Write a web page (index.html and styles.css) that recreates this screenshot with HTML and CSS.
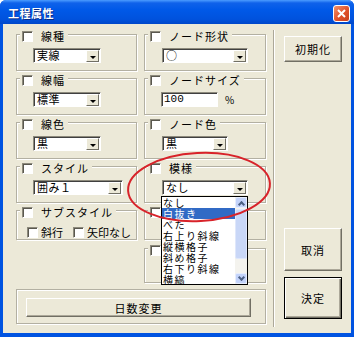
FILE: index.html
```html
<!DOCTYPE html>
<html lang="ja">
<head>
  <meta charset="UTF-8" />
  <title>工程属性</title>
  <link rel="stylesheet" href="styles.css">
</head>
<body>
  <div class="window">
    <div class="titlebar">
      <span class="title">工程属性</span>
      <span class="close-btn">
        <svg width="9" height="9" viewBox="0 0 9 9"><path d="M1 1 L8 8 M8 1 L1 8" stroke="#fff" stroke-width="2"/></svg>
      </span>
    </div>

    <div class="client">
      <div class="panels">
        <div class="cols">
          <div class="col">
            <div class="group">
              <div class="legend"><span class="check"></span><span class="cap">線種</span></div>
              <div class="combo w68"><span class="value">実線</span><span class="drop"></span></div>
            </div>
            <div class="group">
              <div class="legend"><span class="check"></span><span class="cap">線幅</span></div>
              <div class="combo w68"><span class="value">標準</span><span class="drop"></span></div>
            </div>
            <div class="group">
              <div class="legend"><span class="check"></span><span class="cap">線色</span></div>
              <div class="combo w68"><span class="value">黒</span><span class="drop"></span></div>
            </div>
            <div class="group">
              <div class="legend"><span class="check"></span><span class="cap">スタイル</span></div>
              <div class="combo w90"><span class="value">囲み１</span><span class="drop"></span></div>
            </div>
            <div class="group short">
              <div class="legend"><span class="check"></span><span class="cap">サブスタイル</span></div>
              <div class="subrow">
                <span class="check"></span><span class="sub-cap">斜行</span>
                <span class="check"></span><span class="sub-cap">矢印なし</span>
              </div>
            </div>
          </div>

          <div class="col mid">
            <div class="group">
              <div class="legend"><span class="check"></span><span class="cap">ノード形状</span></div>
              <div class="combo w86"><span class="value">○</span><span class="drop"></span></div>
            </div>
            <div class="group">
              <div class="legend"><span class="check"></span><span class="cap">ノードサイズ</span></div>
              <div class="size-row">
                <div class="edit">100</div><span class="unit">%</span>
              </div>
            </div>
            <div class="group">
              <div class="legend"><span class="check"></span><span class="cap">ノード色</span></div>
              <div class="combo w66"><span class="value">黒</span><span class="drop"></span></div>
            </div>
            <div class="group">
              <div class="legend"><span class="check"></span><span class="cap">模様</span></div>
              <div class="combo w86 open">
                <span class="value">なし</span><span class="drop"></span>
                <div class="listbox">
                  <div class="options">
                    <div class="opt">なし</div>
                    <div class="opt selected">白抜き</div>
                    <div class="opt">べた</div>
                    <div class="opt">右上り斜線</div>
                    <div class="opt">縦横格子</div>
                    <div class="opt">斜め格子</div>
                    <div class="opt">右下り斜線</div>
                    <div class="opt">横縞</div>
                  </div>
                  <div class="scroll">
                    <span class="sbtn up"></span>
                    <span class="thumb"></span>
                    <span class="sbtn down"></span>
                  </div>
                </div>
              </div>
            </div>
            <div class="group short">
              <div class="legend"><span class="check"></span></div>
            </div>
            <div class="group last">
              <div class="legend"><span class="check"></span></div>
            </div>
          </div>
        </div>

        <div class="group wide">
          <button class="btn days">日数変更</button>
        </div>
      </div>

      <div class="sep"></div>

      <div class="side">
        <button class="btn init">初期化</button>
        <button class="btn cancel">取消</button>
        <button class="btn ok">決定</button>
      </div>
    </div>

    <svg class="mark" width="160" height="84" viewBox="0 0 160 84">
      <ellipse cx="76" cy="40" rx="71" ry="34" transform="rotate(-3 76 40)" fill="none" stroke="#d8232a" stroke-width="2"/>
    </svg>
  </div>
</body>
</html>
```

FILE: styles.css
```css
* {
  box-sizing: border-box;
}
body {
  margin: 0;
  background: #fff;
  font-family: "Noto Sans CJK JP", sans-serif;
  font-size: 11px;
  color: #000;
}
.window {
  position: relative;
  width: 354px;
  height: 337px;
  background: #0053e1;
  border-radius: 6px 6px 0 0;
  padding: 0 3px 4px;
  display: flex;
  flex-direction: column;
}
.titlebar {
  height: 24px;
  margin: 0 -3px;
  padding: 2px 4px 0 8px;
  display: flex;
  align-items: center;
  justify-content: space-between;
  border-radius: 6px 6px 0 0;
  background: linear-gradient(#4b9cff 0, #0f62ea 3px, #0059e8 40%, #0052dd 80%, #0047c9 100%);
}
.title {
  color: #fff;
  font-weight: bold;
  font-size: 11px;
  letter-spacing: 0.5px;
  text-shadow: 1px 1px #0b2a84;
}
.close-btn {
  width: 17px;
  height: 17px;
  border: 1px solid #fff;
  border-radius: 3px;
  background: linear-gradient(135deg, #f0926c, #e0522b 55%, #c8401c);
  display: flex;
  align-items: center;
  justify-content: center;
}
.client {
  flex: 1;
  background: #ece9d8;
  display: flex;
  padding-left: 13px;
}
.panels {
  width: 250px;
  padding-top: 10px;
}
.cols {
  display: grid;
  grid-template-columns: 121px 122px;
  column-gap: 7px;
  align-items: start;
}
.col {
  display: flex;
  flex-direction: column;
  gap: 7px;
}
.group {
  height: 37px;
  border: 1px solid #b3b0a2;
  box-shadow: inset 1px 1px #fff, 1px 1px #fff;
}
.group.short {
  height: 30px;
}
.group.last {
  height: 35px;
  margin-top: 1px;
}
.legend {
  display: flex;
  align-items: center;
  width: fit-content;
  height: 12px;
  margin: -5px 0 0 3px;
  padding: 0 3px 0 2px;
  background: #ece9d8;
}
.check {
  width: 11px;
  height: 11px;
  flex: none;
  background: #fff;
  border: 1px solid;
  border-color: #8d8a7c #fff #fff #8d8a7c;
  box-shadow: inset 1px 1px #5a584f;
}
.cap {
  margin-left: 8px;
  letter-spacing: 1px;
  white-space: nowrap;
}
.combo {
  position: relative;
  display: flex;
  height: 15px;
  margin: 6px 0 0 16px;
  background: #fff;
  border: 1px solid;
  border-color: #8d8a7c #fff #fff #8d8a7c;
  box-shadow: inset 1px 1px #404040;
}
.mid .combo {
  margin-left: 17px;
}
.w68 { width: 68px; }
.w90 { width: 90px; }
.w86 { width: 86px; }
.w66 { width: 66px; }
.value {
  padding: 0 0 0 3px;
  line-height: 13px;
  letter-spacing: 0.5px;
}
.drop {
  position: relative;
  width: 13px;
  margin: 1px 1px 0 auto;
  background: #ece9d8;
  border: 1px solid;
  border-color: #fff #716f64 #716f64 #fff;
}
.drop::after {
  content: "";
  position: absolute;
  left: 3px;
  top: 5px;
  border-left: 3px solid transparent;
  border-right: 3px solid transparent;
  border-top: 3px solid #000;
}
.size-row {
  display: flex;
  align-items: center;
  margin: 6px 0 0 16px;
}
.edit {
  width: 57px;
  height: 15px;
  padding-left: 2px;
  background: #fff;
  border: 1px solid;
  border-color: #8d8a7c #fff #fff #8d8a7c;
  box-shadow: inset 1px 1px #404040;
  font-family: "Liberation Mono", monospace;
  font-size: 11px;
  line-height: 13px;
}
.unit {
  margin-left: 7px;
  font-size: 10px;
}
.subrow {
  display: flex;
  align-items: center;
  margin: 6px 0 0 10px;
  white-space: nowrap;
}
.sub-cap {
  flex: none;
  margin: 0 10px 0 3px;
}
.listbox {
  position: absolute;
  left: -2px;
  top: 15px;
  width: 87px;
  height: 89px;
  display: flex;
  background: #fff;
  border: 1px solid #000;
  z-index: 2;
}
.options {
  flex: 1;
  min-width: 0;
}
.opt {
  height: 11px;
  line-height: 11px;
  font-size: 10px;
  padding-left: 1px;
  letter-spacing: 1.5px;
  white-space: nowrap;
}
.opt.selected {
  background: #316ac5;
  color: #fff;
}
.scroll {
  width: 12px;
  display: flex;
  flex-direction: column;
  background: #f4f3ee;
}
.sbtn {
  position: relative;
  height: 11px;
  border-radius: 2px;
  background: #c3d3fa;
  border: 1px solid #e6edfd;
}
.sbtn::after {
  content: "";
  position: absolute;
  left: 3px;
  width: 3px;
  height: 3px;
  border: solid #4d6185;
  border-width: 2px 2px 0 0;
}
.sbtn.up::after {
  top: 4px;
  transform: rotate(-45deg);
}
.sbtn.down {
  margin-top: auto;
}
.sbtn.down::after {
  top: 1px;
  transform: rotate(135deg);
}
.thumb {
  height: 50px;
  margin-top: 1px;
  border-radius: 2px;
  background: #c9d7f7;
  border: 1px solid #dfe7fb;
}
.group.wide {
  width: 250px;
  height: 35px;
  margin-top: 6px;
  padding: 8px 14px 0 9px;
}
.btn {
  display: block;
  font-family: inherit;
  font-size: 11px;
  letter-spacing: 1px;
  color: #000;
  background: #ece9d8;
  border: 1px solid;
  border-color: #fff #716f64 #716f64 #fff;
  box-shadow: inset -1px -1px #aca899;
  padding: 0;
}
.btn.days {
  width: 100%;
  height: 19px;
}
.sep {
  width: 2px;
  margin: 6px 0 6px 7px;
  border-left: 1px solid #aca899;
  border-right: 1px solid #fff;
}
.side {
  width: 58px;
  margin-left: 9px;
  padding: 12px 0 14px;
  display: flex;
  flex-direction: column;
}
.btn.init {
  height: 26px;
}
.btn.cancel {
  height: 43px;
  margin-top: auto;
}
.btn.ok {
  height: 42px;
  margin-top: 6px;
  border: 1px solid #000;
  box-shadow: inset 1px 1px #fff, inset -1px -1px #716f64, inset -2px -2px #aca899;
}
.mark {
  position: absolute;
  left: 123px;
  top: 147px;
  pointer-events: none;
  z-index: 3;
}
```
